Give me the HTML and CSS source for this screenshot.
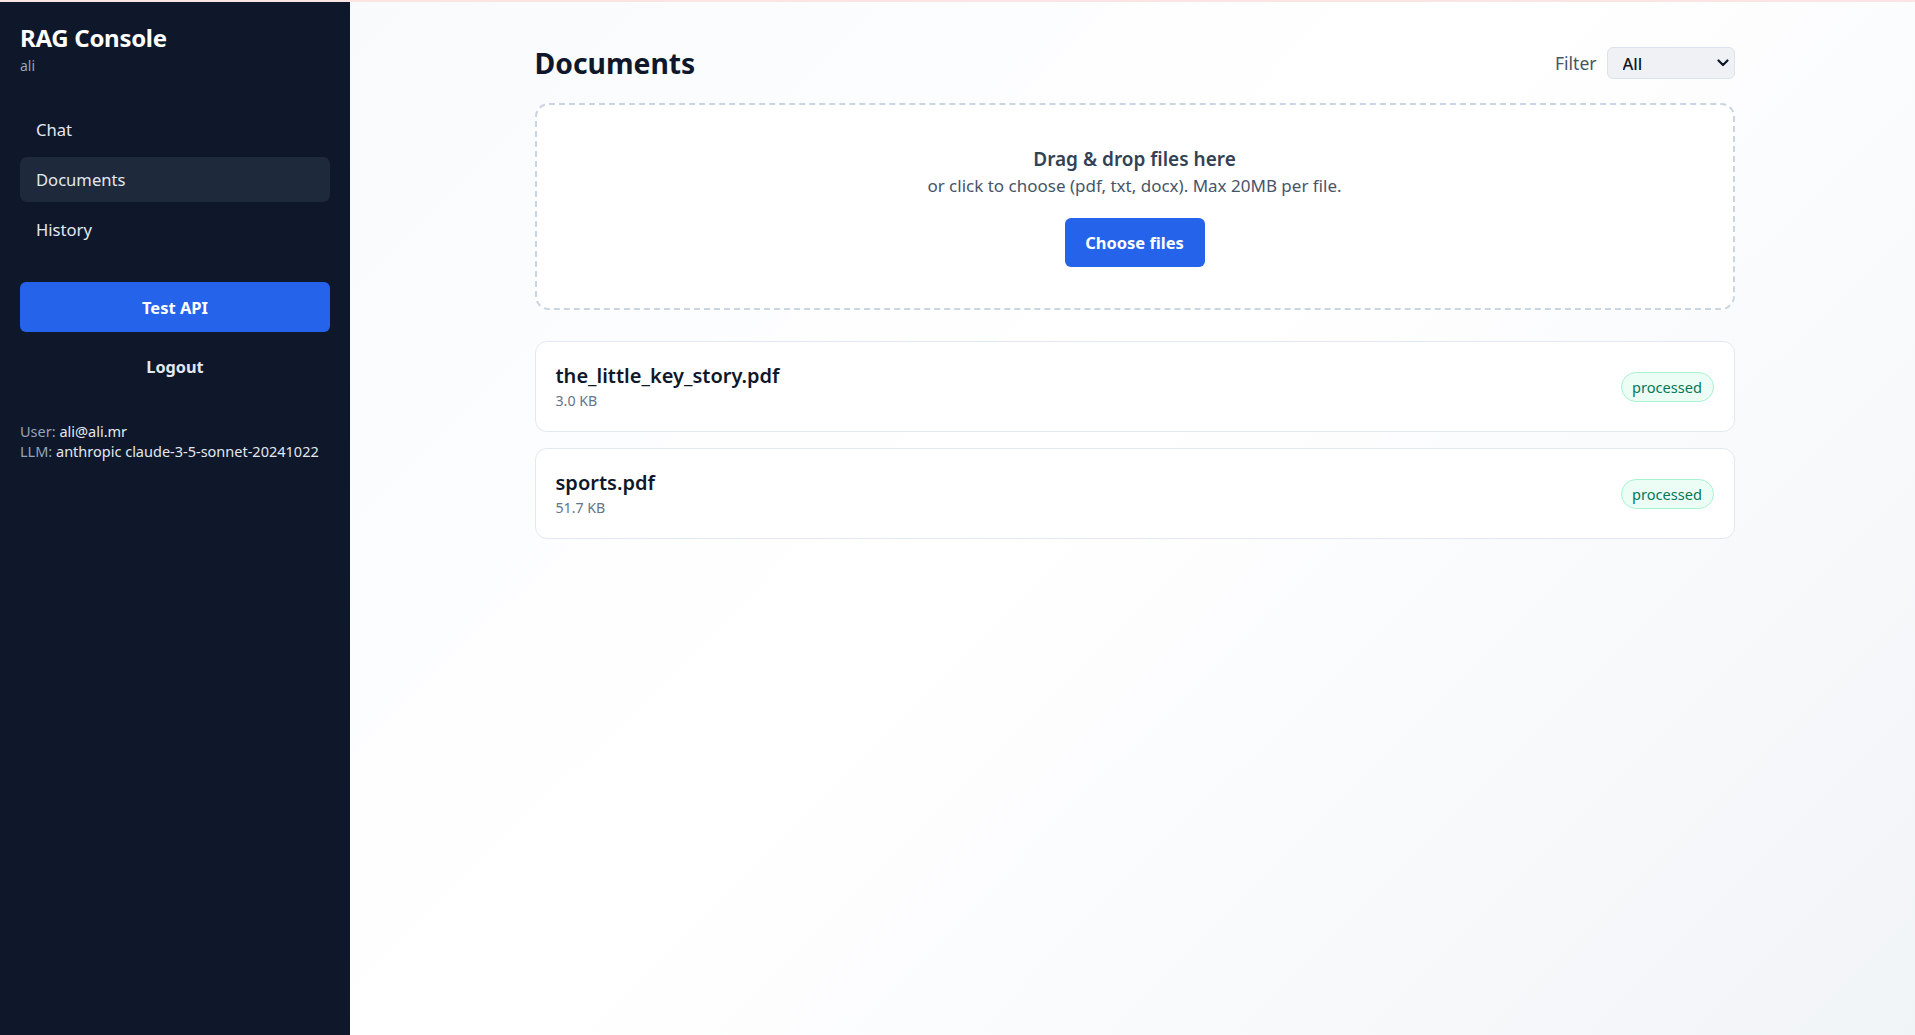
FILE: index.html
```html
<!DOCTYPE html>
<html lang="en">
<head>
<meta charset="utf-8">
<title>RAG Console</title>
<link rel="stylesheet" href="styles.css">
</head>
<body>
<div class="topline"></div>
<div class="app">
  <aside class="sidebar">
    <div class="brand">
      <div class="brand-title">RAG Console</div>
      <div class="brand-sub">ali</div>
    </div>
    <nav class="nav">
      <a class="nav-item">Chat</a>
      <a class="nav-item active">Documents</a>
      <a class="nav-item">History</a>
    </nav>
    <button class="btn-primary btn-test">Test API</button>
    <button class="btn-logout">Logout</button>
    <div class="meta">
      <div><span class="meta-key">User:</span> <span class="meta-val">ali@ali.mr</span></div>
      <div><span class="meta-key">LLM:</span> <span class="meta-val">anthropic claude-3-5-sonnet-20241022</span></div>
    </div>
  </aside>
  <main class="main">
    <div class="content">
      <header class="page-header">
        <h1 class="page-title">Documents</h1>
        <div class="filter">
          <label class="filter-label" for="flt">Filter</label>
          <div class="select-wrap">
            <select id="flt" class="select">
              <option>All</option>
              <option>processed</option>
              <option>pending</option>
            </select>
            <svg class="chevron" width="12" height="8" viewBox="0 0 12 8"><path d="M1.5 1.5 L6 6 L10.5 1.5" fill="none" stroke="#0f172a" stroke-width="2.2" stroke-linecap="round" stroke-linejoin="round"/></svg>
          </div>
        </div>
      </header>
      <section class="dropzone">
        <div class="dz-title">Drag &amp; drop files here</div>
        <div class="dz-sub">or click to choose (pdf, txt, docx). Max 20MB per file.</div>
        <button class="btn-primary btn-choose">Choose files</button>
      </section>
      <ul class="doc-list">
        <li class="doc-card">
          <div class="doc-info">
            <div class="doc-name">the_little_key_story.pdf</div>
            <div class="doc-size">3.0 KB</div>
          </div>
          <span class="badge">processed</span>
        </li>
        <li class="doc-card">
          <div class="doc-info">
            <div class="doc-name">sports.pdf</div>
            <div class="doc-size">51.7 KB</div>
          </div>
          <span class="badge">processed</span>
        </li>
      </ul>
    </div>
  </main>
</div>
</body>
</html>
```

FILE: styles.css
```css
* { box-sizing: border-box; }
html, body { margin: 0; padding: 0; height: 100%; }
body {
  font-family: "Noto Sans", "Open Sans", sans-serif;
  color: #0f172a;
  background: #f8fafc;
  overflow: hidden;
}
.topline { height: 2px; background: #fbe4e4; }
.app { display: flex; height: calc(100vh - 2px); }

.sidebar {
  width: 350px;
  flex: 0 0 350px;
  background: #0f172a;
  padding: 20px 20px;
  display: flex;
  flex-direction: column;
}
.brand-title { font-size: 24px; line-height: 32px; font-weight: 700; color: #fff; letter-spacing: -0.3px; }
.brand-sub { font-size: 14px; line-height: 20px; color: #94a3b8; margin-top: 2px; }
.nav { display: flex; flex-direction: column; gap: 5px; margin-top: 31px; }
.nav-item {
  height: 45px; display: flex; align-items: center; padding: 0 16px;
  font-size: 16.6px; color: #e2e8f0; border-radius: 7px; cursor: pointer;
}
.nav-item.active { background: #1e293b; }
.btn-primary {
  border: 0; background: #2563eb; color: #fff; font-family: inherit;
  font-weight: 700; border-radius: 6px; cursor: pointer;
}
.btn-test { margin-top: 30px; height: 50px; font-size: 16.5px; width: 100%; }
.btn-logout {
  margin-top: 10px; height: 50px; background: transparent; border: 0;
  color: #e2e8f0; font-family: inherit; font-size: 16.3px; font-weight: 700; cursor: pointer;
}
.meta { margin-top: 29px; font-size: 14.5px; line-height: 20px; }
.meta-key { color: #94a3b8; }
.meta-val { color: #e2e8f0; }

.main {
  flex: 1;
  background: linear-gradient(135deg, #f8fafc 0%, #ffffff 45%, #f1f4f7 100%);
  padding: 41px 0 0 4px;
  overflow: hidden;
}
.content { width: 1200px; margin: 0 auto; }
.page-header { display: flex; align-items: center; justify-content: space-between; height: 40px; }
.page-title { margin: 0; font-size: 28.3px; line-height: 40px; font-weight: 700; color: #0f172a; }
.filter { display: flex; align-items: center; gap: 10px; }
.filter-label { font-size: 17.5px; color: #475569; }
.select-wrap { position: relative; }
.select {
  appearance: none; -webkit-appearance: none;
  width: 128px; height: 32px; padding: 0 30px 0 15px;
  background: #eff1f4; border: 1px solid #dbe3ec; border-radius: 6px;
  font-family: inherit; font-size: 16.5px; font-weight: 500; color: #0f172a;
}
.chevron { position: absolute; right: 6px; top: 12px; pointer-events: none; }

.dropzone {
  margin-top: 20px;
  height: 207px;
  border: 2px dashed #cbd5e1;
  border-radius: 14px;
  background: #fff;
  display: flex; flex-direction: column; align-items: center;
  padding-top: 40px;
}
.dz-title { font-size: 19px; line-height: 28px; font-weight: 600; color: #334155; }
.dz-sub { font-size: 17px; line-height: 24px; color: #475569; margin-top: 1px; }
.btn-choose { margin-top: 20px; width: 140px; height: 49px; font-size: 16.5px; }

.doc-list { list-style: none; margin: 31px 0 0; padding: 0; display: flex; flex-direction: column; gap: 16px; }
.doc-card {
  background: #fff; border: 1px solid #e2e8f0; border-radius: 12px;
  padding: 20px; display: flex; align-items: center; justify-content: space-between;
}
.doc-name { font-size: 20px; line-height: 28px; font-weight: 600; color: #0f172a; }
.doc-size { font-size: 14.2px; line-height: 20px; color: #64748b; margin-top: 1px; }
.badge {
  height: 30px; display: inline-flex; align-items: center; padding: 0 10.5px;
  border-radius: 999px; background: #ecfdf5; border: 1px solid #a7f3d0;
  color: #047857; font-size: 14.6px;
}
```
